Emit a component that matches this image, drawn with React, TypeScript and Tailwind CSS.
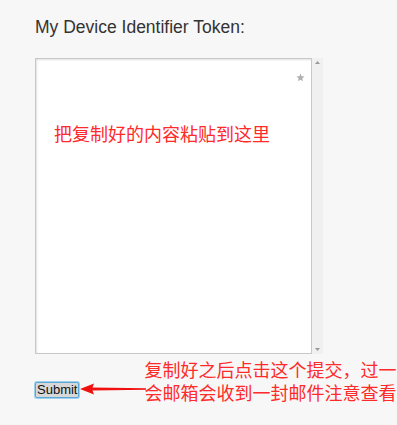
export default function App() {
  return (
    <div className="w-[397px] h-[425px] bg-[#f7f7f7] pl-[35px] pt-[16px] font-['Liberation_Sans',sans-serif] overflow-hidden">
      <div className="text-[17.5px] leading-[22px] text-[#333]">My Device Identifier Token:</div>
      <div className="mt-[20px] flex h-[296px] w-[288px]">
        <div className="relative flex-1 bg-white border border-[#c8c8c8] shadow-[inset_1px_1px_2px_rgba(0,0,0,0.12)]">
          <svg width="9" height="9" viewBox="0 0 10 10" className="absolute right-[6px] top-[14px]">
            <path d="M5 0.5 L6.2 3.6 L9.5 3.8 L7 6 L7.8 9.3 L5 7.5 L2.2 9.3 L3 6 L0.5 3.8 L3.8 3.6Z" fill="#b0b0b0" />
          </svg>
          <div className="pl-[18px] pt-[63px] text-[18px] leading-[22px] text-[#ff2a2a] font-['Noto_Sans_CJK_SC',sans-serif]">
            把复制好的内容粘贴到这里
          </div>
        </div>
        <div className="w-[11px] bg-[#f0f0f0] flex flex-col items-center justify-between py-[3px]">
          <svg width="5" height="3" viewBox="0 0 5 3"><path d="M0 3 L2.5 0 L5 3Z" fill="#999" /></svg>
          <svg width="5" height="3" viewBox="0 0 5 3"><path d="M0 0 L2.5 3 L5 0Z" fill="#999" /></svg>
        </div>
      </div>
      <div className="mt-[4px] flex items-center">
        <button className="mt-[18px] h-[16px] px-[1px] text-[13px] leading-[13px] text-[#111] bg-[#d8d8d8] border border-[#5aa8d8] rounded-[2px] shadow-[0_0_0_1px_#9fd0ee]">
          Submit
        </button>
        <svg width="68" height="12" viewBox="0 0 68 12" className="mt-[17px] ml-[1px]">
          <path d="M0 6 L14 0.5 L12.5 4.5 L66 5.2 L66 6.8 L12.5 7.5 L14 11.5Z" fill="#f01010" />
        </svg>
        <div className="-ml-[4px] flex flex-col gap-[1px] text-[18px] leading-[22px] text-[#ff2a2a] font-['Noto_Sans_CJK_SC',sans-serif] whitespace-nowrap">
          <div>复制好之后点击这个提交，过一</div>
          <div>会邮箱会收到一封邮件注意查看</div>
        </div>
      </div>
    </div>
  );
}
